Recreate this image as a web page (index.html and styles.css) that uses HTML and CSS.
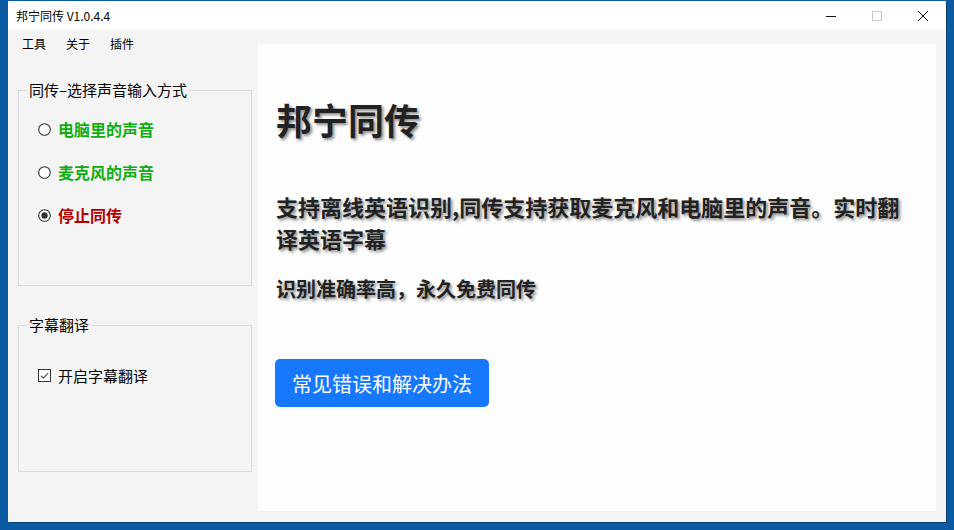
FILE: index.html
```html
<html>

<head>
    <link rel="stylesheet" href="styles.css">
    <title>邦宁同传</title>
</head>

<body>
    <div class="window">
        <div id="title-bar">
            <div class="title">邦宁同传 V1.0.4.4</div>
            <div class="buttons">
                <div class="button" id="minimize">
                    <svg width="12" height="12" viewBox="0 0 12 12"><path d="M1 6.5h10" stroke="#111" stroke-width="1"/></svg>
                </div>
                <div class="button disabled" id="maximize">
                    <svg width="12" height="12" viewBox="0 0 12 12"><rect x="1.5" y="1.5" width="9" height="9" fill="none" stroke="#c8c8c8" stroke-width="1"/></svg>
                </div>
                <div class="button" id="close">
                    <svg width="12" height="12" viewBox="0 0 12 12"><path d="M1 1l10 10M11 1L1 11" stroke="#111" stroke-width="1"/></svg>
                </div>
            </div>
        </div>
        <div class="client">
            <div class="side">
                <div class="menu">
                    <span>工具</span>
                    <span>关于</span>
                    <span>插件</span>
                </div>
                <fieldset class="group">
                    <legend>同传–选择声音输入方式</legend>
                    <div class="opts opts-source">
                        <label class="opt green">
                            <svg class="radio" width="13" height="13" viewBox="0 0 13 13"><circle cx="6.5" cy="6.5" r="5.8" fill="#fff" stroke="#333" stroke-width="1.1"/></svg>
                            电脑里的声音
                        </label>
                        <label class="opt green">
                            <svg class="radio" width="13" height="13" viewBox="0 0 13 13"><circle cx="6.5" cy="6.5" r="5.8" fill="#fff" stroke="#333" stroke-width="1.1"/></svg>
                            麦克风的声音
                        </label>
                        <label class="opt red">
                            <svg class="radio" width="13" height="13" viewBox="0 0 13 13"><circle cx="6.5" cy="6.5" r="5.8" fill="#fff" stroke="#333" stroke-width="1.1"/><circle cx="6.5" cy="6.5" r="3.2" fill="#333"/></svg>
                            停止同传
                        </label>
                    </div>
                </fieldset>
                <fieldset class="group group-sub">
                    <legend>字幕翻译</legend>
                    <div class="opts opts-sub">
                        <label class="opt check">
                            <svg class="box" width="13" height="13" viewBox="0 0 13 13"><rect x="0.5" y="0.5" width="12" height="12" fill="#fff" stroke="#333" stroke-width="1"/><path d="M3 6.8l2.3 2.3 4.8-5" fill="none" stroke="#555" stroke-width="1.2"/></svg>
                            开启字幕翻译
                        </label>
                    </div>
                </fieldset>
            </div>
            <div class="panel">
                <h1>邦宁同传</h1>
                <p class="lead">支持离线英语识别,同传支持获取麦克风和电脑里的声音。实时翻译英语字幕</p>
                <p class="sub">识别准确率高，永久免费同传</p>
                <button class="help">常见错误和解决办法</button>
            </div>
        </div>
    </div>
</body>

</html>
```

FILE: styles.css
```css
html,
body {
    margin: 0;
    padding: 0;
}

body {
    width: 954px;
    height: 530px;
    overflow: hidden;
    background-color: #0a5ba3;
    padding: 1px 8px 0 8px;
    box-sizing: border-box;
    font-family: "Noto Sans CJK SC", "Noto Sans", sans-serif;
    color: #000;
    user-select: none;
}

.window {
    width: 938px;
    height: 521px;
    background-color: #f4f4f4;
    display: flex;
    flex-direction: column;
    box-shadow: 1px 1px 0 #08406f;
}

#title-bar {
    height: 29px;
    background-color: #fff;
    display: flex;
    align-items: center;
    justify-content: space-between;
    flex: none;
}

#title-bar .title {
    font-size: 12px;
    padding-left: 8px;
}

#title-bar .buttons {
    display: flex;
    height: 100%;
}

#title-bar .button {
    width: 46px;
    height: 100%;
    display: flex;
    align-items: center;
    justify-content: center;
}

.client {
    flex: 1;
    display: grid;
    grid-template-columns: 250px 1fr;
    min-height: 0;
}

.menu {
    height: 26px;
    display: flex;
    align-items: center;
    gap: 20px;
    padding-left: 14px;
    font-size: 12px;
}

.group {
    margin: 24px 6px 0 10px;
    padding: 0 0 0 8px;
    border: 1px solid #dadada;
    min-width: 0;
}

.group legend {
    font-size: 15px;
    line-height: 20px;
    padding: 0 2px;
}

.group-sub {
    margin-top: 29px;
}

.opts {
    box-sizing: border-box;
    padding-left: 11px;
    display: flex;
    flex-direction: column;
    gap: 19px;
}

.opts-source {
    height: 185px;
    padding-top: 17px;
}

.opts-sub {
    height: 136px;
    padding-top: 28px;
}

.opt {
    height: 24px;
    display: flex;
    align-items: center;
    gap: 7px;
    font-size: 16px;
    font-weight: bold;
}

.opt.green {
    color: #10ad10;
}

.opt.red {
    color: #b00000;
}

.opt.check {
    font-size: 15px;
    font-weight: normal;
    color: #000;
}

.panel {
    margin: 14px 10px 11px 0;
    background-color: #fdfdfd;
    padding: 50px 18px 0 18px;
}

.panel h1 {
    margin: 0;
    font-size: 36px;
    line-height: 50px;
    font-weight: bold;
    color: #222;
    text-shadow: 2px 2px 3px rgba(0, 0, 0, 0.45);
}

.panel .lead {
    margin: 46px 0 0 0;
    font-size: 22px;
    line-height: 32px;
    font-weight: bold;
    color: #222;
    text-shadow: 2px 2px 3px rgba(0, 0, 0, 0.45);
}

.panel .sub {
    margin: 21px 0 0 0;
    font-size: 20px;
    line-height: 28px;
    font-weight: bold;
    color: #222;
    text-shadow: 2px 2px 3px rgba(0, 0, 0, 0.45);
}

.help {
    margin: 56px 0 0 -1px;
    width: 214px;
    height: 48px;
    border: none;
    border-radius: 5px;
    background-color: #1677ff;
    color: #fff;
    font-family: "Noto Sans CJK SC", "Noto Sans", sans-serif;
    font-size: 20px;
    padding: 0;
}
```
